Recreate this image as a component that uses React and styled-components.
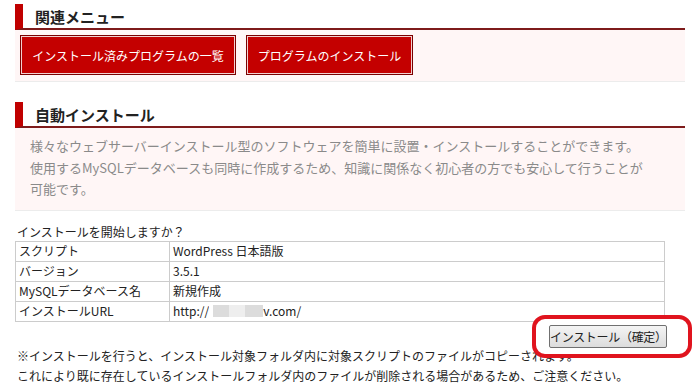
import React from "react";
import styled, { createGlobalStyle } from "styled-components";

const GlobalStyle = createGlobalStyle`
  body {
    margin: 0;
    background: #fff;
    font-family: "Noto Sans CJK JP", "Noto Sans", sans-serif;
    color: #333;
  }
`;

const Page = styled.div`
  width: 697px;
  height: 389px;
  overflow: hidden;
  padding: 4px 12px 0 15px;
  box-sizing: border-box;
`;

const Section = styled.section`
  margin-bottom: ${(p) => p.$gap || 0}px;
`;

const Heading = styled.h2`
  margin: 0;
  height: 24px;
  display: flex;
  align-items: center;
  border-left: 8px solid #c00000;
  border-bottom: 2px solid #7e1b1b;
  padding-left: 12px;
  font-size: 15px;
  font-weight: bold;
  color: #222;
  line-height: 1;
`;

const Panel = styled.div`
  background: #fff6f6;
  border-bottom: 1px solid #ececec;
  padding: ${(p) => p.$pad};
`;

const MenuRow = styled.div`
  display: flex;
  gap: 10px;
`;

const MenuButton = styled.button`
  height: 40px;
  padding: 0;
  background: #c40000;
  border: 1px solid #7a0000;
  box-shadow: inset 0 0 0 1px #f3d0d0;
  color: #fff;
  font-family: inherit;
  font-size: 12px;
  white-space: nowrap;
  cursor: pointer;
  width: ${(p) => p.$w}px;
`;

const Lead = styled.p`
  margin: 0;
  font-size: 13px;
  line-height: 21.5px;
  color: #8a8a8a;
`;

const Question = styled.p`
  margin: 11px 0 0 2px;
  font-size: 12px;
  line-height: 19px;
  color: #222;
`;

const Table = styled.table`
  border-collapse: collapse;
  width: 650px;
  font-size: 12px;
  color: #222;
  td {
    border: 1px solid #cccccc;
    height: 19px;
    padding: 0 3px;
    line-height: 18px;
  }
  td:first-child {
    width: 147px;
  }
`;

const Masked = styled.span`
  display: inline-block;
  width: 54px;
  height: 12px;
  vertical-align: -1px;
  background: linear-gradient(90deg, #fff 0 4px, #dcdcdc 4px 20px, #eee 20px 36px, #dcdcdc 36px 54px);
`;

const ActionRow = styled.div`
  display: flex;
  justify-content: flex-end;
  margin-right: -7px;
  height: 0;
  position: relative;
  z-index: 2;
`;

const Callout = styled.div`
  flex-shrink: 0;
  margin-top: -7px;
  padding: 6px 21px 6px 13px;
  border: 4px solid #e0141e;
  border-radius: 13px;
  background: #fff;
  height: fit-content;
`;

const ConfirmButton = styled.button`
  display: block;
  height: 23px;
  width: 118px;
  padding: 0;
  background: linear-gradient(#f4f4f4, #dcdcdc);
  border: 1px solid #707070;
  border-radius: 2px;
  font-family: inherit;
  font-size: 12px;
  letter-spacing: -0.3px;
  color: #222;
  white-space: nowrap;
  cursor: pointer;
`;

const Note = styled.p`
  margin: 24px 0 0 2px;
  font-size: 12px;
  line-height: 20px;
  color: #222;
  white-space: nowrap;
`;

const menus = [
  { label: "インストール済みプログラムの一覧", w: 216 },
  { label: "プログラムのインストール", w: 167 },
];

const rows = [
  ["スクリプト", "WordPress 日本語版"],
  ["バージョン", "3.5.1"],
  ["MySQLデータベース名", "新規作成"],
  ["インストールURL", null],
];

const App = () => {
  return (
    <>
      <GlobalStyle />
      <Page>
        <Section $gap={20}>
          <Heading>関連メニュー</Heading>
          <Panel $pad="5px 5px 6px 5px">
            <MenuRow>
              {menus.map((m) => (
                <MenuButton key={m.label} $w={m.w}>
                  {m.label}
                </MenuButton>
              ))}
            </MenuRow>
          </Panel>
        </Section>

        <Section>
          <Heading>自動インストール</Heading>
          <Panel $pad="7px 15px 10px 15px">
            <Lead>
              様々なウェブサーバーインストール型のソフトウェアを簡単に設置・インストールすることができます。
              <br />
              使用するMySQLデータベースも同時に作成するため、知識に関係なく初心者の方でも安心して行うことが
              <br />
              可能です。
            </Lead>
          </Panel>
        </Section>

        <Question>インストールを開始しますか？</Question>
        <Table>
          <tbody>
            {rows.map(([k, v]) => (
              <tr key={k}>
                <td>{k}</td>
                <td>
                  {v ?? (
                    <>
                      http://
                      <Masked />
                      v.com/
                    </>
                  )}
                </td>
              </tr>
            ))}
          </tbody>
        </Table>

        <ActionRow>
          <Callout>
            <ConfirmButton>インストール（確定）</ConfirmButton>
          </Callout>
        </ActionRow>

        <Note>
          ※インストールを行うと、インストール対象フォルダ内に対象スクリプトのファイルがコピーされます。
          <br />
          これにより既に存在しているインストールフォルダ内のファイルが削除される場合があるため、ご注意ください。
        </Note>
      </Page>
    </>
  );
};

export default App;
